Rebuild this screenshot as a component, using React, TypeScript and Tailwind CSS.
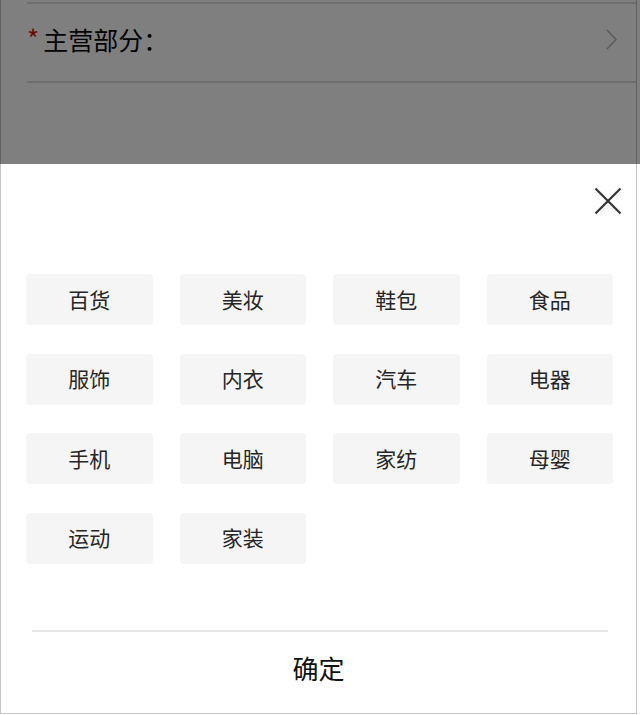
const categories = [
  '百货', '美妆', '鞋包', '食品',
  '服饰', '内衣', '汽车', '电器',
  '手机', '电脑', '家纺', '母婴',
  '运动', '家装',
]

export default function App() {
  return (
    <div
      className="relative w-[640px] h-[715px] bg-white overflow-hidden"
      style={{ fontFamily: "'Noto Sans CJK SC', 'Noto Sans', sans-serif" }}
    >
      <div className="w-[637px] h-[714px] border-x border-b border-[#c4c4c4] flex flex-col">
        {/* Page behind the sheet */}
        <div className="h-[163px] shrink-0">
          <div className="ml-[26px] mt-[2px] h-[2px] bg-[#dcdcdc]" />
          <div className="ml-[26px] h-[79px] flex items-center border-b-2 border-[#dcdcdc] pr-[19px] pb-[6px]">
            <span className="text-[#e01010] text-[26px] leading-none -mt-[4px] mr-[4px]">*</span>
            <span className="text-[25px] text-black leading-none">主营部分：</span>
            <svg className="ml-auto" width="11" height="21" viewBox="0 0 11 21" fill="none">
              <path d="M1 1 L10 10.5 L1 20" stroke="#b4b4b4" strokeWidth="1.4" />
            </svg>
          </div>
        </div>

        {/* Bottom sheet */}
        <div className="flex-1 flex flex-col">
          <div className="flex justify-end pt-[24px] pr-[14px]">
            <button aria-label="关闭" className="w-[28px] h-[28px]">
              <svg width="28" height="28" viewBox="0 0 28 28" fill="none">
                <path d="M1.5 1.5 L26.5 26.5 M26.5 1.5 L1.5 26.5" stroke="#333" strokeWidth="2.2" />
              </svg>
            </button>
          </div>

          <div className="mt-[59px] pl-[25px] pr-[23px] grid grid-cols-4 gap-x-[27px] gap-y-[28.5px]">
            {categories.map(name => (
              <button
                key={name}
                className="h-[51px] rounded-[4px] bg-[#f5f5f5] text-[21px] text-[#262626] flex items-center justify-center"
              >
                {name}
              </button>
            ))}
          </div>

          <div className="mt-[66px] ml-[31px] w-[576px] h-[2px] bg-[#e6e6e6]" />
          <button className="h-[72px] flex items-center justify-center text-[26px] text-[#111]">
            确定
          </button>
        </div>
      </div>

      {/* Dimmed mask over the page */}
      <div className="absolute left-0 top-0 w-full h-[164px] bg-black/50" />
    </div>
  )
}
